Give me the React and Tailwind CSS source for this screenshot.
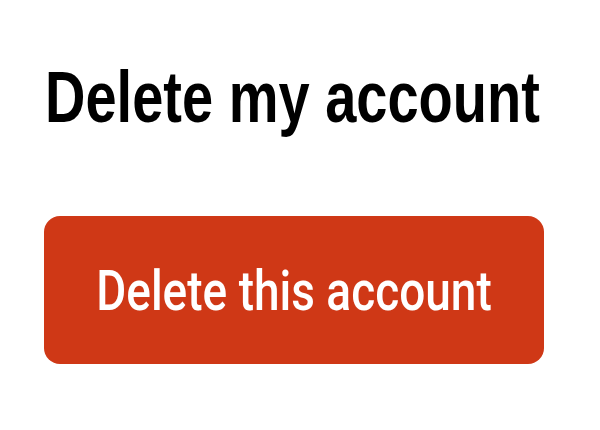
export default function App() {
  return (
    <div className="w-[600px] h-[430px] bg-white flex flex-col pl-[45px] pt-[69px] overflow-hidden">
      <h1
        className="whitespace-nowrap text-[56px] leading-[56px] font-bold text-black"
        style={{ fontFamily: '"Liberation Sans", Arial, sans-serif' }}
      >
        <span className="inline-block scale-y-[1.29]">Delete my account</span>
      </h1>
      <button
        className="mt-[91px] -ml-px w-[500px] h-[148px] rounded-[16px] bg-[#cf3816] flex items-center justify-center pt-[2px] text-white"
        style={{ fontFamily: 'Roboto, "Liberation Sans", sans-serif' }}
      >
        <span className="inline-block whitespace-nowrap text-[46px] leading-[46px] font-medium scale-y-[1.19]">
          Delete this account
        </span>
      </button>
    </div>
  );
}
